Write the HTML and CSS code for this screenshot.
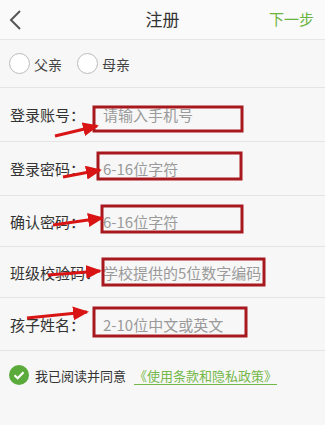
FILE: index.html
```html
<!DOCTYPE html>
<html lang="zh">
<head>
    <meta charset="UTF-8">
    <meta name="viewport" content="width=device-width, initial-scale=1.0">
    <title>注册</title>
    <link rel="stylesheet" href="styles.css">
</head>
<body>
    <div class="page">
        <div class="header">
            <span class="back">
                <svg width="14" height="22" viewBox="0 0 14 22"><path d="M12 2 L3 11 L12 20" fill="none" stroke="#555" stroke-width="2"/></svg>
            </span>
            <span class="title">注册</span>
            <span class="next">下一步</span>
        </div>
        <div class="roles">
            <label class="role"><span class="radio"></span>父亲</label>
            <label class="role"><span class="radio"></span>母亲</label>
        </div>
        <div class="field row1"><span class="label">登录账号：</span><span class="hint">请输入手机号</span></div>
        <div class="field row2"><span class="label">登录密码：</span><span class="hint">6-16位字符</span></div>
        <div class="field row3"><span class="label">确认密码：</span><span class="hint">6-16位字符</span></div>
        <div class="field row4"><span class="label">班级校验码：</span><span class="hint">学校提供的5位数字编码</span></div>
        <div class="field row5"><span class="label">孩子姓名：</span><span class="hint">2-10位中文或英文</span></div>
        <div class="agree">
            <span class="check">
                <svg width="20" height="20" viewBox="0 0 20 20"><circle cx="10" cy="10" r="10" fill="#5aaa3c"/><path d="M5.5 10.2 L8.7 13.2 L14.5 7.2" fill="none" stroke="#fff" stroke-width="2.2"/></svg>
            </span>
            <span class="agree-text">我已阅读并同意</span>
            <span class="terms">《使用条款和隐私政策》</span>
        </div>

        <!-- annotations drawn over the screenshot -->
        <svg class="marks" width="325" height="425" viewBox="0 0 325 425">
            <defs>
                <marker id="head" markerUnits="userSpaceOnUse" markerWidth="16" markerHeight="14" refX="14" refY="7" orient="auto">
                    <path d="M0 0 L16 7 L0 14 Z" fill="#d81414"/>
                </marker>
            </defs>
            <g fill="none" stroke="#a8191f" stroke-width="3">
                <rect x="94" y="107" width="148" height="24"/>
                <rect x="98" y="153" width="143" height="26"/>
                <rect x="102" y="206" width="140" height="26"/>
                <rect x="103" y="259" width="161" height="26"/>
                <rect x="94" y="308" width="152" height="28"/>
            </g>
            <g stroke="#d81414" stroke-width="3" marker-end="url(#head)">
                <line x1="55" y1="136" x2="97" y2="126"/>
                <line x1="63" y1="177" x2="100" y2="170"/>
                <line x1="53" y1="225" x2="102" y2="218"/>
                <line x1="48" y1="275" x2="100" y2="271"/>
                <line x1="27" y1="318" x2="87" y2="312"/>
            </g>
        </svg>
    </div>
</body>
</html>
```

FILE: styles.css
```css
body {
    margin: 0;
    background-color: #f7f7f7;
    font-family: "Noto Sans CJK SC", "Noto Sans", sans-serif;
    color: #333;
}
.page {
    position: relative;
    width: 325px;
    height: 425px;
    overflow: hidden;
}
.header {
    display: grid;
    grid-template-columns: 1fr auto 1fr;
    align-items: center;
    height: 39px;
    background-color: #fafafa;
    border-bottom: 1px solid #e6e6e6;
}
.back {
    display: flex;
    padding-left: 8px;
}
.title {
    font-size: 17px;
    color: #333;
    margin-top: -3px;
}
.next {
    justify-self: end;
    padding-right: 11px;
    font-size: 15px;
    color: #6cb43f;
    margin-top: -3px;
}
.roles {
    display: flex;
    align-items: center;
    gap: 15px;
    height: 47px;
    padding-left: 9px;
    border-bottom: 1px solid #e4e4e4;
}
.role {
    display: flex;
    align-items: center;
    gap: 4px;
    font-size: 14px;
    color: #444;
}
.radio {
    width: 19px;
    height: 19px;
    border: 1px solid #bbb;
    border-radius: 50%;
    background-color: #fff;
}
.field {
    display: flex;
    align-items: center;
    padding-left: 10px;
    border-bottom: 1px solid #e4e4e4;
}
.row1 { height: 53px; }
.row2 { height: 53px; }
.row3 { height: 50px; }
.row4 { height: 50px; }
.row5 { height: 52px; }
.label {
    width: 93px;
    flex-shrink: 0;
    font-size: 15px;
    color: #333;
    white-space: nowrap;
}
.hint {
    font-size: 15px;
    color: #9a9a9a;
    white-space: nowrap;
}
.agree {
    display: flex;
    align-items: center;
    height: 48px;
    padding-left: 9px;
    font-size: 13px;
}
.check {
    display: flex;
    margin-right: 6px;
}
.agree-text {
    color: #333;
    margin-right: 8px;
}
.terms {
    color: #74b84a;
    text-decoration: underline;
    text-underline-offset: 3px;
}
.marks {
    position: absolute;
    left: 0;
    top: 0;
    pointer-events: none;
}
```
